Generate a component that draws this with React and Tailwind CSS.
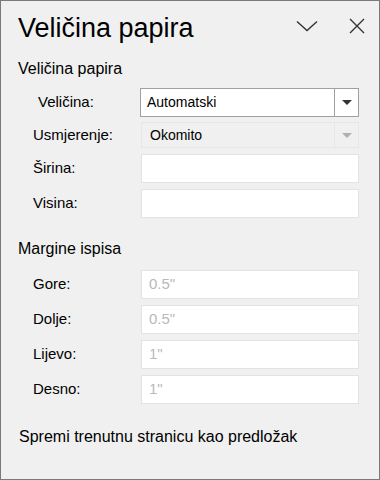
import React from "react";

const font = { fontFamily: '"Liberation Sans", Arial, sans-serif' };

function Field({ label, value, labelPad = "pl-[32px]" }) {
  return (
    <div className="flex h-[29px] items-center">
      <div className={`w-[140px] shrink-0 text-[15px] text-black ${labelPad}`}>{label}</div>
      <div className="flex h-full w-[218px] items-center border border-[#e3e3e3] bg-white pl-[7px] text-[15px] text-[#b9b9b9]">
        {value}
      </div>
    </div>
  );
}

export default function App() {
  return (
    <div className="h-[480px] w-[380px] border border-[#7a7a7a] bg-[#f0f0f0] text-black" style={font}>
      <div className="flex h-[50px] items-center pl-[17px] pr-[14px]">
        <h1 className="mt-[4px] flex-1 text-[27px] leading-none">Veličina papira</h1>
        <svg width="22" height="12" viewBox="0 0 22 12" className="mr-[31px]" fill="none" stroke="#333" strokeWidth="1.4">
          <path d="M1 1.5 L11 10.5 L21 1.5" />
        </svg>
        <svg width="16" height="16" viewBox="0 0 16 16" fill="none" stroke="#333" strokeWidth="1.4">
          <path d="M1 1 L15 15 M15 1 L1 15" />
        </svg>
      </div>

      <div className="mt-[10px] pl-[17px] text-[16px] leading-none">Veličina papira</div>

      <div className="mt-[11px] flex flex-col">
        <div className="flex h-[29px] items-center">
          <div className="w-[139px] shrink-0 pl-[37px] text-[15px]">Veličina:</div>
          <div className="flex h-full w-[219px] items-center border border-[#a0a0a0] bg-white">
            <div className="flex-1 pl-[6px] text-[14px]">Automatski</div>
            <div className="flex h-full w-[24px] items-center justify-center border-l border-[#a0a0a0]">
              <svg width="10" height="5" viewBox="0 0 10 5"><path d="M0 0 L10 0 L5 5 Z" fill="#333" /></svg>
            </div>
          </div>
        </div>

        <div className="mt-[5px] flex h-[26px] items-center">
          <div className="w-[140px] shrink-0 pl-[32px] text-[15px]">Usmjerenje:</div>
          <div className="flex h-full w-[218px] items-center border border-[#e6e6e6] bg-[#f0f0f0]">
            <div className="flex-1 pl-[8px] text-[14px]">Okomito</div>
            <div className="flex h-full w-[24px] items-center justify-center border-l border-[#e6e6e6]">
              <svg width="10" height="5" viewBox="0 0 10 5"><path d="M0 0 L10 0 L5 5 Z" fill="#b0b0b0" /></svg>
            </div>
          </div>
        </div>

        <div className="mt-[6px] flex flex-col gap-[6px]">
          <Field label="Širina:" value="" />
          <Field label="Visina:" value="" />
        </div>
      </div>

      <div className="mt-[23px] pl-[17px] text-[16px] leading-none">Margine ispisa</div>

      <div className="mt-[13px] flex flex-col gap-[6px]">
        <Field label="Gore:" value='0.5"' />
        <Field label="Dolje:" value='0.5"' />
        <Field label="Lijevo:" value='1"' />
        <Field label="Desno:" value='1"' />
      </div>

      <div className="mt-[25px] pl-[18px] text-[16px] leading-none">Spremi trenutnu stranicu kao predložak</div>
    </div>
  );
}
